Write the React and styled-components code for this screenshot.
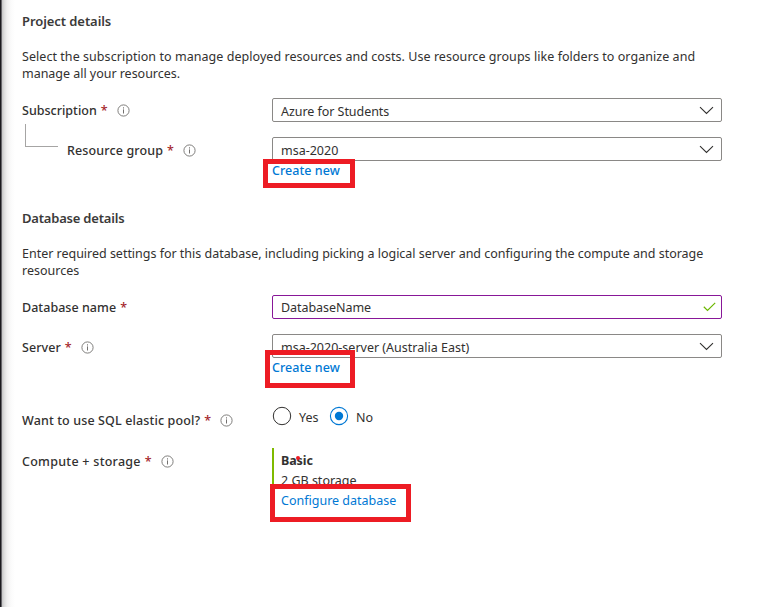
import React from "react";
import styled, { createGlobalStyle } from "styled-components";

const Global = createGlobalStyle`
  *, *::before, *::after { box-sizing: border-box; }
  body { margin: 0; background: #fff; }
`;

const Page = styled.div`
  display: flex;
  width: 782px;
  height: 607px;
  overflow: hidden;
  background: #fff;
  color: #323130;
  font-family: "Noto Sans", sans-serif;
  font-size: 12.5px;
  line-height: 17px;
  white-space: nowrap;
`;

const Edge = styled.div`
  flex: none;
  width: 22px;
  background: linear-gradient(90deg, #1b1a1e 0, #1b1a1e 1px, #66656a 1px, #66656a 2px, #c4c4c4 2px, #dcdcdc 4px, #f0f0f0 7px, #fbfbfb 11px, #fff 15px);
`;

const Form = styled.main`
  flex: none;
  width: 700px;
  padding-top: 13px;
`;

const Section = styled.section`
  height: 197px;
`;

const Text = styled.span`
  letter-spacing: ${(p) => p.$ls || 0}px;
`;

const Title = styled.h2`
  margin: 0 0 18px;
  height: 17px;
  font-size: 13px;
  line-height: 17px;
  font-weight: 600;
  color: #3b3a39;
`;

const Description = styled.p`
  margin: 0 0 16px;
  height: 34px;
`;

const Row = styled.div`
  display: grid;
  grid-template-columns: 250px 450px;
  height: ${(p) => p.$h || 39}px;
  align-items: start;
`;

const Label = styled.div`
  display: flex;
  align-items: center;
  height: 17px;
  margin-top: ${(p) => p.$top || 4}px;
  font-weight: 500;
`;

const Star = styled.span`
  margin-left: 4px;
  width: 6px;
  color: #a4262c;
`;

const Info = styled.svg`
  flex: none;
  width: 13px;
  height: 13px;
  margin-left: 10px;
`;

const Elbow = styled.span`
  flex: none;
  width: 33px;
  height: 23px;
  margin: -30px 9px 0 3px;
  border: solid #a6a5a4;
  border-width: 0 0 1px 1px;
`;

const Field = styled.div`
  display: flex;
  align-items: center;
  justify-content: space-between;
  height: 24px;
  padding: ${(p) => (p.$valid ? "0 5px 0 8px" : "2px 7px 0 8px")};
  border: 1px solid ${(p) => (p.$valid ? "#881798" : "#8a8886")};
  border-radius: 2px;
`;

const Chevron = styled.svg`
  width: 15px;
  height: 9px;
  margin-top: -2px;
`;

const Check = styled.svg`
  width: 13px;
  height: 10px;
`;

const Link = styled.a`
  position: relative;
  display: block;
  width: max-content;
  height: 17px;
  margin-top: ${(p) => p.$top || 0}px;
  color: #0078d4;
  font-weight: ${(p) => p.$weight || 500};
`;

const Highlight = styled.span`
  position: absolute;
  left: ${(p) => p.$x}px;
  top: ${(p) => p.$y}px;
  width: ${(p) => p.$w}px;
  height: ${(p) => p.$h}px;
  border: 5px solid #ed1c24;
`;

const Radios = styled.div`
  display: flex;
  height: 20px;
  margin-top: -1px;
`;

const Option = styled.div`
  display: flex;
  align-items: center;
  width: 57px;
  gap: 7px;
  & > svg { flex: none; width: 20px; height: 20px; }
  & > span { padding-top: 2px; }
`;

const Tier = styled.div`
  height: 60px;
  padding: 4px 0 0 7px;
  border-left: 2px solid #7fba00;
`;

const TierName = styled.div`
  position: relative;
  width: max-content;
  height: 20px;
  font-weight: 700;
`;

const Dot = styled.i`
  position: absolute;
  left: 15px;
  top: 4px;
  width: 4px;
  height: 4px;
  border-radius: 50%;
  background: #ed1c24;
`;

const Storage = styled.div`
  height: 20px;
`;

function FieldLabel({ children, ls, top, info = true, nested }) {
  return (
    <Label $top={top}>
      {nested && <Elbow />}
      <Text $ls={ls}>{children}</Text>
      <Star>*</Star>
      {info && (
        <Info viewBox="0 0 13 13" fill="none">
          <circle cx="6.5" cy="6.5" r="5.6" stroke="#72706e" strokeWidth="0.9" />
          <path d="M6.5 5.4V9.5M6.5 3.3V4.5" stroke="#72706e" />
        </Info>
      )}
    </Label>
  );
}

function Select({ children, ls }) {
  return (
    <Field>
      <Text $ls={ls}>{children}</Text>
      <Chevron viewBox="0 0 15 9" fill="none" stroke="#323130" strokeWidth="1.1">
        <path d="M1 1.2L7.5 7.5L14 1.2" />
      </Chevron>
    </Field>
  );
}

export default function App() {
  return (
    <>
      <Global />
      <Page>
        <Edge />
        <Form>
          <Section>
            <Title><Text $ls={-0.07}>Project details</Text></Title>
            <Description>
              <Text $ls={0.05}>Select the subscription to manage deployed resources and costs. Use resource groups like folders to organize and</Text>
              <br />
              <Text $ls={-0.03}>manage all your resources.</Text>
            </Description>
            <Row>
              <FieldLabel>Subscription</FieldLabel>
              <Select ls={-0.05}>Azure for Students</Select>
            </Row>
            <Row>
              <FieldLabel nested top={5} ls={0.13}>Resource group</FieldLabel>
              <div>
                <Select>msa-2020</Select>
                <Link $top={1}><Text $ls={0.05}>Create new</Text><Highlight $x={-9} $y={-3} $w={92} $h={29} /></Link>
              </div>
            </Row>
          </Section>
          <Section>
            <Title><Text $ls={-0.2}>Database details</Text></Title>
            <Description>
              <Text $ls={-0.018}>Enter required settings for this database, including picking a logical server and configuring the compute and storage</Text>
              <br />
              <Text>resources</Text>
            </Description>
            <Row>
              <FieldLabel info={false} ls={0.04}>Database name</FieldLabel>
              <Field $valid>
                <Text $ls={-0.05}>DatabaseName</Text>
                <Check viewBox="0 0 13 10" fill="none" stroke="#6bb700" strokeWidth="1.2">
                  <path d="M.8 4.8L4.5 8.4L12.2 .9" />
                </Check>
              </Field>
            </Row>
            <Row>
              <FieldLabel top={5} ls={0.06}>Server</FieldLabel>
              <div>
                <Select>msa-2020-server (Australia East)</Select>
                <Link $top={1}><Text $ls={0.05}>Create new</Text><Highlight $x={-7} $y={-9} $w={90} $h={38} /></Link>
              </div>
            </Row>
          </Section>
          <Row $h={41}>
            <FieldLabel top={5} ls={0.13}>Want to use SQL elastic pool?</FieldLabel>
            <Radios>
              <Option>
                <svg viewBox="0 0 20 20"><circle cx="10" cy="10" r="8.7" fill="none" stroke="#323130" /></svg>
                <Text>Yes</Text>
              </Option>
              <Option>
                <svg viewBox="0 0 20 20"><circle cx="10" cy="10" r="8.6" fill="none" stroke="#0078d4" strokeWidth="1.1" /><circle cx="10" cy="10" r="4.2" fill="#0078d4" /></svg>
                <Text>No</Text>
              </Option>
            </Radios>
          </Row>
          <Row $h={80}>
            <FieldLabel top={5} ls={0.27}>Compute + storage</FieldLabel>
            <Tier>
              <TierName><Text $ls={-0.1}>Basic</Text><Dot /></TierName>
              <Storage><Text>2 GB storage</Text></Storage>
              <Link $weight={400}><Text>Configure database</Text><Highlight $x={-11} $y={-8} $w={141} $h={38} /></Link>
            </Tier>
          </Row>
        </Form>
      </Page>
    </>
  );
}
